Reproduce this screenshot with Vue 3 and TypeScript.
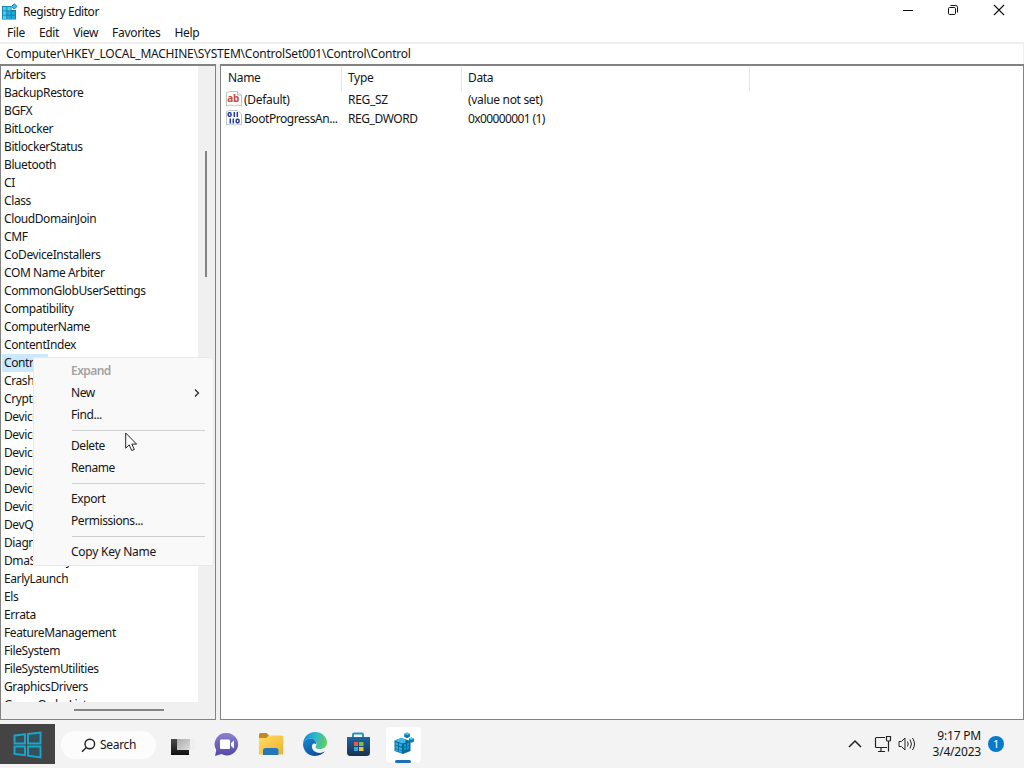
<script setup lang="ts">
const menus = ['File', 'Edit', 'View', 'Favorites', 'Help']
const keys: string[] = [
  'Arbiters', 'BackupRestore', 'BGFX', 'BitLocker', 'BitlockerStatus', 'Bluetooth', 'CI', 'Class',
  'CloudDomainJoin', 'CMF', 'CoDeviceInstallers', 'COM Name Arbiter', 'CommonGlobUserSettings',
  'Compatibility', 'ComputerName', 'ContentIndex', 'Control', 'CrashControl', 'Cryptography',
  'DeviceClasses', 'DeviceContainers', 'DeviceGuard', 'DeviceMigration', 'DeviceOverrides',
  'DevicePanels', 'DevQuery', 'Diagnostics', 'DmaSecurity', 'EarlyLaunch', 'Els', 'Errata',
  'FeatureManagement', 'FileSystem', 'FileSystemUtilities', 'GraphicsDrivers', 'GroupOrderList',
]
interface Entry { label?: string; disabled?: boolean; sub?: boolean }
const entries: Entry[] = [
  { label: 'Expand', disabled: true }, { label: 'New', sub: true }, { label: 'Find...' }, {},
  { label: 'Delete' }, { label: 'Rename' }, {},
  { label: 'Export' }, { label: 'Permissions...' }, {}, { label: 'Copy Key Name' },
]
</script>

<template>
  <div class="screen">
    <header class="title">
      <svg class="appicon" width="18" height="18" viewBox="0 0 18 18">
        <path d="M1 3h9.500v4H15v9.500H1z" fill="#0b7aa6" />
        <path d="M1.800 3.800h3.600v3.600H1.800zM6.200 3.800h3.600v3.600H6.200zM1.800 8.200h3.600v3.600H1.800zM1.800 12.500h3.600v3.400H1.800z" fill="#4cccef" />
        <path d="M6.200 8.200h3.600v3.600H6.200zM10.600 8.200h3.600v3.600h-3.600zM6.200 12.500h3.600v3.400H6.200zM10.600 12.500h3.600v3.400h-3.600z" fill="#22a9d6" />
        <path d="m13.300 .8 2.700 2.600-2.700 2.700-2.700-2.700z" fill="#41c3ea" stroke="#0b7aa6" stroke-width="1" />
      </svg>
      <span class="name">Registry Editor</span>
      <svg class="winbtns" width="110" height="20" viewBox="0 0 110 20" fill="none" stroke="#111">
        <path d="M3 10.500h10" />
        <rect x="48.500" y="7.500" width="7" height="7" rx="1.200" />
        <path d="M50.500 5.500h5.200q1.800 0 1.800 1.800v5.200" />
        <path d="m94 5 10 10M104 5 94 15" stroke-width="1.100" />
      </svg>
    </header>
    <nav class="menubar"><span v-for="m in menus" :key="m">{{ m }}</span></nav>
    <div class="address">Computer\HKEY_LOCAL_MACHINE\SYSTEM\ControlSet001\Control\Control</div>

    <main class="panes">
      <section class="tree">
        <div class="treetop">
          <div class="keys">
            <div v-for="k in keys" :key="k" class="key"><span :class="{ sel: k === 'Control' }">{{ k }}</span></div>
          </div>
          <div class="vbar"><i /></div>
        </div>
        <div class="hbar"><i /></div>
      </section>
      <section class="values">
        <div class="row head"><span>Name</span><span>Type</span><span>Data</span></div>
        <div class="row">
          <span class="valname">
            <svg width="16" height="16" viewBox="0 0 16 16">
              <path d="M.5 1.500 4 .5h7.500L15.500 4v11l-4-1-3 1-4-1-4 1z" fill="#fff" stroke="#b4b4b4" stroke-width=".8" />
              <path d="M11.500 .5V4h4" fill="#eee" stroke="#aaa" stroke-width=".8" />
              <text x="1.200" y="10.500" class="ab">ab</text>
            </svg>(Default)</span>
          <span>REG_SZ</span><span>(value not set)</span>
        </div>
        <div class="row">
          <span class="valname">
            <svg width="16" height="16" viewBox="0 0 16 16">
              <path d="M.5 1.500 4 .5h7.500L15.500 4v11l-4-1-3 1-4-1-4 1z" fill="#fff" stroke="#b0b7c4" stroke-width=".8" />
              <g fill="none" stroke="#273c9b" stroke-width="1.500">
                <rect x="2.200" y="2.700" width="2.800" height="3.600" rx="1" /><path d="M8.300 2v5M11.300 2v5" />
                <path d="M4.300 8.500v5M7.300 8.500v5" /><rect x="10.200" y="9.200" width="2.800" height="3.600" rx="1" />
              </g>
            </svg><b>BootProgressAn...</b></span>
          <span>REG_DWORD</span><span>0x00000001 (1)</span>
        </div>
      </section>
    </main>

    <footer class="taskbar">
      <div class="start">
        <svg width="29" height="28" viewBox="0 0 29 28" fill="#34505c" stroke="#1ba6cb" stroke-width="1.900">
          <path d="M1.500 4.500 12 3.300v9.200H1.500zM15 3l12.500-1.500v11H15zM1.500 15.500H12v8.700L1.500 23zM15 15.500h12.500v11L15 24.700z" />
        </svg>
      </div>
      <div class="search">
        <svg width="15" height="15" viewBox="0 0 15 15" fill="none" stroke="#222" stroke-width="1.400"><circle cx="8.800" cy="6" r="4.800" /><path d="M5.300 9.500 1 13.800" /></svg>
        <span>Search</span>
      </div>
      <svg class="apps" width="264" height="44" viewBox="0 0 264 44">
        <defs>
          <linearGradient id="dark" x1="0" y1="0" x2="0" y2="1"><stop stop-color="#4a4a4a" /><stop offset="1" stop-color="#111" /></linearGradient>
          <linearGradient id="light" x1="0" y1="0" x2="1" y2="1"><stop stop-color="#aaa" /><stop offset="1" stop-color="#ddd" /></linearGradient>
          <linearGradient id="chat" x1="0" y1="0" x2="0" y2="1"><stop stop-color="#8b82cf" /><stop offset="1" stop-color="#5148a5" /></linearGradient>
          <linearGradient id="folder" x1="0" y1="0" x2="1" y2="1"><stop stop-color="#ffdc67" /><stop offset="1" stop-color="#efb22c" /></linearGradient>
          <linearGradient id="edgeTop" x1="0" y1=".3" x2="1" y2=".5"><stop stop-color="#1886cf" /><stop offset=".45" stop-color="#2bb3d2" /><stop offset="1" stop-color="#62cf62" /></linearGradient>
          <linearGradient id="edgeLow" x1="0" y1="0" x2=".7" y2="1"><stop stop-color="#1688d6" /><stop offset="1" stop-color="#114a94" /></linearGradient>
          <linearGradient id="store" x1="0" y1="0" x2="0" y2="1"><stop stop-color="#1c65a7" /><stop offset="1" stop-color="#173250" /></linearGradient>
        </defs>
        <path d="M11 15h18v16H11z" fill="url(#dark)" />
        <path d="M17 15h13v11H17z" fill="url(#light)" /><path d="M30 15h5v11h-5z" fill="#efefef" />
        <path d="M67 9a11.200 11.200 0 1 1-5.500 21L55 32l1.300-6A11.200 11.200 0 0 1 67 9z" fill="url(#chat)" />
        <rect x="60" y="15.500" width="10" height="9.500" rx="1" fill="#fff" /><path d="m71 19 3-2.500v8L71 22z" fill="#fff" />
        <path d="M99 10.500q0-1.500 1.500-1.500h6L109 11.500l-3 3h-7z" fill="#c28a1d" />
        <path d="M99 14h7.500l2.500-2.500h12.500q1.500 0 1.500 1.500v17.500H99z" fill="url(#folder)" />
        <path d="M103 31v-4.500q0-2.500 2.500-2.500h10.500q2.500 0 2.500 2.500V31z" fill="#2478b9" />
        <path d="M143.100 19.500C143.500 13 148.500 8 155 8c7 0 12 5 12 10.500 0 4.500-3.500 6.500-7 6.500-3 0-5-1.200-4.300-2.600 1.800-2.200 1-5.900-2.200-7.200-4.500-1.700-9 .5-10.400 4.300z" fill="url(#edgeTop)" />
        <path d="M143 20c.8-4 5.500-6.800 10-5 2.500 1 3.600 3.200 3.300 5.200-1.200-1.200-3.200-1-4 .6-1.400 3 1 7.200 5.700 8 3.200.5 5.500-.4 7.300-1.700C163.200 30.200 159.500 32 155 32c-7 0-12-5.500-12-12z" fill="url(#edgeLow)" />
        <path d="M193 14v-3.500q0-1 1-1h8q1 0 1 1V14" fill="none" stroke="#2b8fc4" stroke-width="2" />
        <path d="M187 13h23v15.500q0 3.500-3.500 3.500h-16q-3.500 0-3.500-3.500z" fill="url(#store)" />
        <path d="M194 18h4v4h-4z" fill="#ee5b3a" /><path d="M199 18h4.500v4H199z" fill="#86bc3a" /><path d="M194 23h4v4h-4z" fill="#37a7e2" /><path d="M199 23h4.500v4H199z" fill="#f3bd35" />
        <rect x="225.500" y="2.500" width="36" height="36.500" rx="4" fill="#fff" stroke="#eaeaea" stroke-width=".5" />
        <path d="m234.500 16.500 7-2.500 9 3v10l-7.500 3-8.500-3z" fill="#086ba0" />
        <path d="m234.500 16.500 7-2.500 4 1.500 0 3-3 1z" fill="#3cbce6" />
        <path d="M235.500 18.200l2.500.8v2.500l-2.500-.8zM239 19.300l2.800.8v2.500l-2.800-.8zM235.500 21.800l2.500.8v2.500l-2.500-.8zM239 22.900l2.800.8v2.500l-2.800-.8zM235.500 25l2.500.8v2l-2.500-.8zM239 26.100l2.800.8v2l-2.800-.8z" fill="#33afe0" />
        <path d="M244 20.500l2-.8v2.500l-2 .8zM247 19.400l2-.8v2.500l-2 .8zM244 24l2-.8v2.500l-2 .8zM247 22.900l2-.8v2.500l-2 .8z" fill="#169acf" />
        <path d="m247 8.500 2.800 1.300v3l-2.800 1.400-2.800-1.400v-3zM251.500 13.500l2.500 1.200v2.800l-2.500 1.300-2.500-1.300v-2.800z" fill="#087bb2" />
        <path d="m247 8.500 2.800 1.300-2.800 1.400-2.800-1.400zM251.500 13.500l2.500 1.200-2.500 1.300-2.500-1.300z" fill="#50c8ed" />
        <rect x="235" y="36" width="16" height="3" rx="1.500" fill="#1b6fb9" />
      </svg>
      <svg class="tray" width="72" height="24" viewBox="0 0 72 24" fill="none" stroke="#222" stroke-width="1.200">
        <path d="m3 15 6-6 6 6" stroke-width="1.500" />
        <path d="M39 5.500H30.500q-1 0-1 1v8q0 1 1 1H41M35 15.500v4M32 19.500h7" />
        <path d="M40.500 4.500h4V8q0 1-1 1h-2q-1 0-1-1zM42.500 9v10.500" />
        <path d="M53 9.500h2.500L59 6v12l-3.500-3.500H53zM61.500 9.500q1.500 2.500 0 5M64 7.500q3 4.500 0 9M66.500 6q4 6 0 12" stroke-width="1" />
      </svg>
      <div class="clock"><div>9:17 PM</div><div>3/4/2023</div></div>
      <div class="badge">1</div>
    </footer>

    <div class="context">
      <template v-for="(e, i) in entries" :key="i">
        <div v-if="e.label" class="item" :class="{ disabled: e.disabled }">
          <span>{{ e.label }}</span>
          <svg v-if="e.sub" width="6" height="8" viewBox="0 0 6 8" fill="none" stroke="#222" stroke-width="1.200"><path d="m1 .5 3.500 3.500L1 7.500" /></svg>
        </div>
        <div v-else class="sep" />
      </template>
    </div>
    <svg class="cursor" width="13" height="20" viewBox="0 0 13 20"><path d="M.7 1v15.200l3.500-3.300 2.500 5.600 2.600-1.100-2.500-5.300h4.800z" fill="#fff" stroke="#222" stroke-width="1" /></svg>
  </div>
</template>

<style>
body { overflow: hidden; }
</style>
<style scoped>
* { box-sizing: border-box; }
.screen { position: relative; width: 1024px; height: 768px; display: flex; flex-direction: column; background: #fff; color: #151515; font: 12px/18px "Noto Sans", "Open Sans", sans-serif; letter-spacing: -.4px; overflow: hidden; white-space: nowrap; }
svg { display: block; flex: none; }
.title { height: 24px; display: flex; align-items: flex-start; padding-left: 1px; }
.appicon { margin-top: 3px; }
.name { margin: 3px 0 0 4px; letter-spacing: -.45px; }
.winbtns { margin-left: auto; margin-right: 14px; }
.menubar { height: 18px; display: flex; padding-left: 7px; gap: 14px; letter-spacing: -.32px; }
.address { height: 22px; border: solid #efefef; border-width: 2px 1px 0 0; padding: 1px 0 0 6px; background: #fff; letter-spacing: -.22px; }
.panes { height: 656px; display: flex; justify-content: space-between; background: #f0f0f0; }
.tree, .values { border: 1px solid #828282; border-top-width: 2px; }
.values { width: 804px; background: #fff; padding-top: 1px; }
.tree { width: 216px; background: #f0f0f0; display: flex; flex-direction: column; }
.treetop { height: 636px; display: flex; overflow: hidden; }
.keys { width: 197px; background: #fff; }
.key { height: 18px; padding-left: 1px; }
.key span { display: inline-block; height: 18px; padding: 0 2px; }
.key .sel { background: #cce8ff; width: 46px; }
.vbar { width: 17px; padding: 85px 0 0 7px; }
.vbar i { display: block; width: 2px; height: 126px; background: #858585; }
.hbar { padding: 7px 0 0 73px; }
.hbar i { display: block; width: 90px; height: 2px; background: #858585; }
.row { display: grid; grid-template-columns: 121px 120px 288px 1fr; height: 19px; line-height: 18px; letter-spacing: -.44px; }
.row > span { padding-left: 6px; }
.row > span:first-child { padding-left: 7px; }
.row.head { height: 24px; line-height: 22px; letter-spacing: -.32px; }
.head > span { border-right: 1px solid #e5e5e5; }
.row > .valname:first-child { display: flex; padding-left: 5px; gap: 2px; }
.row > span:nth-child(3) { letter-spacing: -.62px; }
.row.head > span:nth-child(3), .row:nth-child(2) > span { letter-spacing: -.32px; }
.valname b { font-weight: 400; }
.ab { font: bold 10px "Noto Sans", sans-serif; fill: #c74b38; letter-spacing: -.3px; }
.taskbar { height: 48px; background: #f3f3f3; display: flex; padding-top: 4px; }
.start { width: 55px; height: 40px; background: #444; display: flex; align-items: center; justify-content: center; padding-top: 2px; }
.search { width: 95px; height: 28px; margin: 7px 0 0 6px; border-radius: 14px; background: #fcfcfc; display: flex; align-items: center; gap: 4px; padding-left: 20px; letter-spacing: -.3px; }
.apps { margin-left: 4px; }
.tray { margin: 8px 0 0 422px; }
.clock { width: 63px; margin-top: 4px; text-align: right; line-height: 16px; letter-spacing: -.2px; }
.badge { width: 16px; height: 16px; border-radius: 50%; margin: 12px 0 0 7px; background: #087acb; color: #fff; text-align: center; line-height: 16px; font-size: 11px; }
.context { position: absolute; left: 33px; top: 357px; width: 181px; height: 209px; padding: 2px 0; background: #f9f9f9; border: 1px solid #e9e9e9; border-radius: 1px 3px 1px 1px; }
.item { height: 22px; line-height: 20px; padding: 0 13px 0 37px; display: flex; align-items: center; justify-content: space-between; letter-spacing: -.42px; }
.item:last-child { letter-spacing: -.25px; }
.disabled { font-weight: 600; color: #a2a2a2; letter-spacing: -.55px; }
.sep { height: 5px; margin: 0 8px 4px 38px; border-bottom: 1px solid #d0d0d0; }
.cursor { position: absolute; left: 125px; top: 432px; }
</style>
